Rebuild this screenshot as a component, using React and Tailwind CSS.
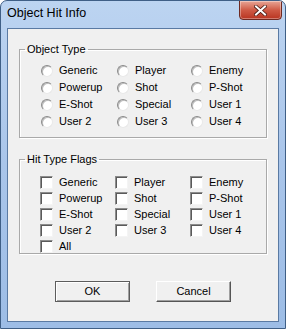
import React from "react";

const font = { fontFamily: '"Liberation Sans", Arial, sans-serif' };

function Radio({ label }) {
  return (
    <div className="flex items-center h-[17px]">
      <span className="w-[12px] h-[12px] rounded-full bg-white border border-t-[#8a8a8a] border-l-[#8a8a8a] border-b-[#e8e8e8] border-r-[#e8e8e8] shadow-[inset_1px_1px_0_#bdbdbd]" />
      <span className="ml-[6px] text-[11px] text-black leading-none">{label}</span>
    </div>
  );
}

function Check({ label }) {
  return (
    <div className="flex items-center h-[16px]">
      <span className="w-[13px] h-[13px] bg-white border border-t-[#8c8c8c] border-l-[#8c8c8c] border-b-[#f4f4f4] border-r-[#f4f4f4] shadow-[inset_1px_1px_0_#5a5a5a]" />
      <span className="ml-[6px] text-[11px] text-black leading-none">{label}</span>
    </div>
  );
}

const names = [
  "Generic", "Player", "Enemy",
  "Powerup", "Shot", "P-Shot",
  "E-Shot", "Special", "User 1",
  "User 2", "User 3", "User 4",
];

export default function App() {
  return (
    <div style={font} className="w-[286px] h-[329px] flex flex-col rounded-t-[7px] border border-[#3f5f86] bg-gradient-to-b from-[#bcd4f1] via-[#a9c5ea] to-[#9dbde6] overflow-hidden">
      <div className="h-[27px] flex items-start justify-between shrink-0">
        <span className="pl-[6px] pt-[6px] text-[12.5px] text-black leading-none">Object Hit Info</span>
        <div className="mr-[3px] -mt-px w-[43px] h-[20px] rounded-b-[4px] border border-[#6e2a22] bg-gradient-to-b from-[#e7a596] via-[#cf5a45] to-[#b8331f] flex items-center justify-center shadow-[inset_0_0_0_1px_rgba(255,255,255,0.35)]">
          <svg width="13" height="11" viewBox="0 0 13 11">
            <path d="M2 1.5 L11 9.5 M11 1.5 L2 9.5" stroke="#4a1b14" strokeWidth="3.6" strokeLinecap="square" />
            <path d="M2 1.5 L11 9.5 M11 1.5 L2 9.5" stroke="#ffffff" strokeWidth="2" strokeLinecap="square" />
          </svg>
        </div>
      </div>
      <div className="flex-1 mx-[6px] mb-[6px] border border-[#5a7aa3] bg-[#f0f0f0] flex flex-col px-[11px] pt-[13px]">
        <fieldset className="border border-[#a9a9a9] shadow-[1px_1px_0_#ffffff,inset_1px_1px_0_#ffffff] px-0 pb-[7px] h-[96px]">
          <legend className="text-[11px] leading-[14px] text-black px-[2px] ml-[5px]">Object Type</legend>
          <div className="grid grid-cols-[76px_74px_60px] mt-[6px] ml-[21px]">
            {names.map((n) => (
              <Radio key={n} label={n} />
            ))}
          </div>
        </fieldset>
        <fieldset className="mt-[14px] border border-[#a9a9a9] shadow-[1px_1px_0_#ffffff,inset_1px_1px_0_#ffffff] px-0 h-[102px]">
          <legend className="text-[11px] leading-[14px] text-black px-[2px] ml-[5px]">Hit Type Flags</legend>
          <div className="grid grid-cols-[75px_75px_60px] mt-[8px] ml-[20px]">
            {names.map((n) => (
              <Check key={n} label={n} />
            ))}
            <Check label="All" />
          </div>
        </fieldset>
        <div className="flex justify-center gap-[26px] mt-[27px]">
          <button className="w-[75px] h-[21px] text-[11px] text-black bg-[#f0f0f0] border border-[#5c5c5c] shadow-[inset_1px_1px_0_#ffffff,inset_-1px_-1px_0_#a0a0a0]">OK</button>
          <button className="w-[75px] h-[21px] text-[11px] text-black bg-[#f0f0f0] border border-t-[#ffffff] border-l-[#ffffff] border-b-[#555555] border-r-[#555555] shadow-[inset_-1px_-1px_0_#a0a0a0]">Cancel</button>
        </div>
      </div>
    </div>
  );
}
